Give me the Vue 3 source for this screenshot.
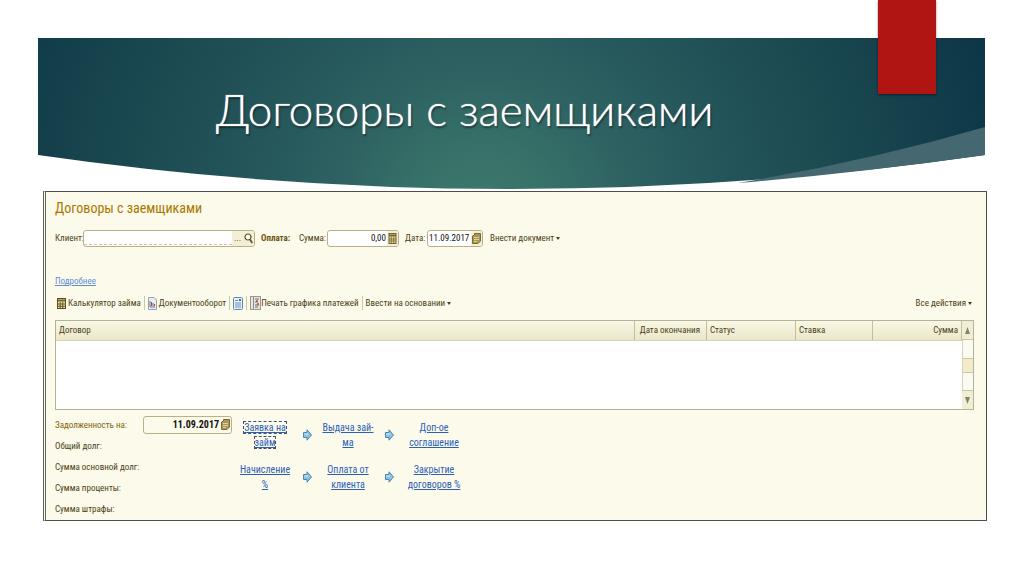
<script setup>
import { ref } from 'vue'

const client = ref('')
const amount = ref('0,00')
const payDate = ref('11.09.2017')
const debtDate = ref('11.09.2017')

const columns = [
  { title: 'Договор', cls: 'c-contract' },
  { title: 'Дата окончания', cls: 'c-end' },
  { title: 'Статус', cls: 'c-status' },
  { title: 'Ставка', cls: 'c-rate' },
  { title: 'Сумма', cls: 'c-sum' }
]

const totals = ['Общий долг:', 'Сумма основной долг:', 'Сумма проценты:', 'Сумма штрафы:']

const steps = [
  [['Заявка на', 'займ'], ['Выдача зай-', 'ма'], ['Доп-ое', 'соглашение']],
  [['Начисление', '%'], ['Оплата от', 'клиента'], ['Закрытие', 'договоров %']]
]
</script>

<template>
  <main class="slide">
    <div class="ribbon"></div>
    <header class="banner">
      <svg class="banner-bg" viewBox="0 0 947 151" preserveAspectRatio="none" aria-hidden="true">
        <defs>
          <radialGradient id="glow" gradientUnits="userSpaceOnUse" cx="445" cy="180" r="540">
            <stop offset="0" stop-color="#3f7b6c" />
            <stop offset="0.15" stop-color="#366f67" />
            <stop offset="0.25" stop-color="#2f6463" />
            <stop offset="0.42" stop-color="#25575b" />
            <stop offset="0.75" stop-color="#17444d" />
            <stop offset="1" stop-color="#0c3547" />
          </radialGradient>
        </defs>
        <path d="M0 0H947V117Q473 185 0 117Z" fill="url(#glow)" />
        <path d="M700 145Q830 123 947 89V117Q820 135 700 145Z" fill="#456770" />
      </svg>
      <h1>Договоры с заемщиками</h1>
    </header>

    <section class="panel">
      <h2>Договоры с заемщиками</h2>

      <form class="filters" @submit.prevent>
        <label for="client" class="l-client">Клиент:</label>
        <span class="field client">
          <input id="client" v-model="client" type="text" />
          <button type="button" class="pick" aria-label="Выбрать">...</button>
          <button type="button" class="pick" aria-label="Найти">
            <svg width="9" height="11" viewBox="0 0 9 11"><circle cx="4" cy="4" r="3" fill="#fffef4" stroke="#5d4f1c" stroke-width="1.2" /><path d="M6 6.5L8.3 10" stroke="#5d4f1c" stroke-width="1.6" /></svg>
          </button>
        </span>
        <strong>Оплата:</strong>
        <label for="amount" class="l-amount">Сумма:</label>
        <span class="field amount">
          <input id="amount" v-model="amount" type="text" />
          <button type="button" class="pick" aria-label="Калькулятор">
            <svg width="9" height="11" viewBox="0 0 9 11"><rect x="1" y="0.5" width="7" height="10" fill="#e9dfae" stroke="#75622a" /><path d="M1 2.5H8" stroke="#75622a" stroke-width="2" /><path d="M3.3 4V10M5.7 4V10M1 6H8M1 8H8" stroke="#75622a" stroke-width="0.8" /></svg>
          </button>
        </span>
        <label for="paydate" class="l-date">Дата:</label>
        <span class="field date">
          <input id="paydate" v-model="payDate" type="text" />
          <button type="button" class="pick" aria-label="Календарь">
            <svg width="9" height="11" viewBox="0 0 9 11"><path d="M2.5 0.5H8.5V8L6 10.5H0.5V3L2.5 2Z" fill="#a8965a" stroke="#7d6a30" /><path d="M2 4.5H7M2 6.5H7M2 8.5H5" stroke="#e5d9a0" stroke-width="0.9" /></svg>
          </button>
        </span>
        <button type="button" class="plain">Внести документ <i class="caret"></i></button>
      </form>

      <div class="more"><a href="#more">Подробнее</a></div>

      <nav class="toolbar">
        <button type="button" class="plain">
          <svg width="9" height="11" viewBox="0 0 9 11"><rect x="0.5" y="0.5" width="8" height="10" fill="#e9dfae" stroke="#5f4d18" /><path d="M1 2.5H8" stroke="#75622a" stroke-width="2" /><path d="M3.2 4V10M5.8 4V10M1 6H8M1 8.3H8" stroke="#5f4d18" stroke-width="0.9" /></svg>
          Калькулятор займа
        </button>
        <i class="sep"></i>
        <button type="button" class="plain">
          <svg width="9" height="13" viewBox="0 0 9 13"><path d="M0.5 0.5H6L8.5 3V12.5H0.5Z" fill="#e8eef3" stroke="#91a3b2" /><path d="M2 4V10H7" fill="none" stroke="#6d7885" /><path d="M3.5 9V5M5 9V6M6.5 9V7" stroke="#a5524d" /></svg>
          Документооборот
        </button>
        <i class="sep"></i>
        <button type="button" class="plain" aria-label="Список">
          <svg width="10" height="13" viewBox="0 0 10 13"><rect x="0.5" y="0.5" width="9" height="12" rx="1" fill="#e4f0fa" stroke="#5f86ab" /><path d="M2 3.5H5M2 6H8M2 8H8M2 10H8" stroke="#6287ad" stroke-width="0.9" /><rect x="6" y="2" width="2" height="2" fill="#386fa8" /></svg>
        </button>
        <i class="sep"></i>
        <button type="button" class="plain print">
          <svg width="11" height="14" viewBox="0 0 11 14"><rect x="0.5" y="0.5" width="10" height="13" fill="#e7e5df" stroke="#9a9691" /><path d="M3.5 1V13" stroke="#8b8b92" /><path d="M5 3H9M5 6H8M5 9H9M5 11H8" stroke="#7c6666" /><path d="M7 4V6M8 7V9" stroke="#a04a40" stroke-width="1.4" /></svg>
          Печать графика платежей
        </button>
        <i class="sep"></i>
        <button type="button" class="plain">Ввести на основании <i class="caret"></i></button>
        <button type="button" class="plain all">Все действия <i class="caret"></i></button>
      </nav>

      <div class="list">
        <table>
          <thead>
            <tr>
              <th v-for="c in columns" :key="c.title" :class="c.cls" scope="col">{{ c.title }}</th>
            </tr>
          </thead>
          <tbody></tbody>
        </table>
        <div class="scroll">
          <button type="button" class="top" aria-label="Вверх"><svg width="7" height="7" viewBox="0 0 7 7"><path d="M3.5 0L6 7H1Z" fill="#85836f" /></svg></button>
          <span class="track"><i class="thumb"></i></span>
          <button type="button" aria-label="Вниз"><svg width="7" height="7" viewBox="0 0 7 7"><path d="M3.5 7L1 0H6Z" fill="#85836f" /></svg></button>
        </div>
      </div>

      <div class="bottom">
        <div class="debts">
          <div class="debt">
            <label for="debtdate">Задолженность на:</label>
            <span class="field debt-date">
              <input id="debtdate" v-model="debtDate" type="text" />
              <button type="button" class="pick" aria-label="Календарь">
                <svg width="9" height="11" viewBox="0 0 9 11"><path d="M2.5 0.5H8.5V8L6 10.5H0.5V3L2.5 2Z" fill="#a8965a" stroke="#7d6a30" /><path d="M2 4.5H7M2 6.5H7M2 8.5H5" stroke="#e5d9a0" stroke-width="0.9" /></svg>
              </button>
            </span>
          </div>
          <div v-for="t in totals" :key="t" class="debt">{{ t }}</div>
        </div>

        <div class="flow">
          <template v-for="(row, r) in steps" :key="r">
            <template v-for="(s, i) in row" :key="s[0]">
              <svg v-if="i" class="arrow" width="9" height="12" viewBox="0 0 9 12"><path d="M0.5 3.5H4V0.8L8.5 6L4 11.2V8.5H0.5Z" fill="#8fc3e4" stroke="#4b87ae" /><path d="M1.5 5H5" stroke="#d5edfa" /></svg>
              <a href="#step" :class="{ focused: r === 0 && i === 0 }"><span>{{ s[0] }}</span><br /><span>{{ s[1] }}</span></a>
            </template>
          </template>
        </div>
      </div>
    </section>
  </main>
</template>

<style>
body {
  margin: 0;
  background: #fff;
}
</style>

<style scoped>
.slide {
  position: relative;
  box-sizing: border-box;
  min-height: 100vh;
  padding: 38px 37px 52px 38px;
  font: 9px/14px "Roboto Condensed", Roboto, "Liberation Sans", sans-serif;
  color: #4b3f16;
}
.ribbon {
  position: absolute;
  z-index: 2;
  top: 0;
  right: 88px;
  width: 58px;
  height: 94px;
  background: #b01513;
  box-shadow: 0 1px 2px rgba(0, 0, 0, 0.5);
}
.banner {
  position: relative;
  height: 151px;
  margin-right: 2px;
}
.banner-bg {
  position: absolute;
  inset: 0;
  width: 100%;
  height: 100%;
}
h1 {
  position: relative;
  margin: 0;
  padding: 46px 0 0 178px;
  font: 300 44px/50px Lato, "Open Sans", sans-serif;
  color: #fff;
  text-shadow: 0 0 1px #f4f8f7, 1px 2px 2px rgba(0, 0, 0, 0.5);
  white-space: nowrap;
}
.panel {
  margin: 2px 0 0 5px;
  padding: 0 12px 1px 9px;
  border: 1px solid #4d4d4a;
  border-left: 3px double #62625e;
  background: #fcfaea;
}
h2 {
  margin: 0;
  font: 14px/32px "Roboto Condensed", Roboto, "Liberation Sans", sans-serif;
  color: #a87800;
}
.filters,
.toolbar {
  display: flex;
  align-items: center;
  white-space: nowrap;
}
.filters {
  height: 28px;
}
.filters strong {
  width: 38px;
  margin-left: 6px;
  color: #6b5310;
}
.l-client,
.l-amount {
  width: 28px;
}
.l-date {
  width: 22px;
}
.field {
  display: flex;
  box-sizing: border-box;
  height: 17px;
  border: 1px solid #b9b08a;
  border-radius: 3px;
  background: #fff;
  overflow: hidden;
}
.field input {
  flex: 1;
  min-width: 0;
  width: 0;
  padding: 0 1px;
  border: 0;
  outline: 0;
  background: none;
  font: inherit;
  color: #111;
}
.client {
  width: 172px;
}
.client input {
  margin-bottom: 1px;
  border-bottom: 1px dashed #e3b5a8;
}
.amount {
  width: 72px;
  margin-right: 6px;
}
.amount input,
.debt-date input {
  text-align: right;
}
.date {
  width: 56px;
  margin-right: 7px;
}
button {
  margin: 0;
  padding: 0;
  border: 0;
  background: none;
  font: inherit;
  color: inherit;
}
.pick {
  display: flex;
  align-items: center;
  justify-content: center;
  width: 11px;
  background: #f3efd6;
}
.plain {
  display: flex;
  align-items: center;
  gap: 2px;
}
.caret {
  border: 2px solid transparent;
  border-top: 3px solid #4b3f16;
  border-bottom: 0;
}
.more {
  margin-top: 19px;
  line-height: 20px;
}
.more a {
  color: #5f8fd6;
}
.toolbar {
  height: 24px;
  padding: 0 2px;
}
.sep {
  width: 1px;
  height: 14px;
  margin: 0 3px;
  background: #cdc7a4;
}
.print {
  gap: 0;
}
.all {
  margin-left: auto;
}
.list {
  display: flex;
  box-sizing: border-box;
  height: 90px;
  margin-top: 5px;
  border: 1px solid #b5b394;
  background: #fff;
}
table {
  flex: 1;
  align-self: flex-start;
  table-layout: fixed;
  border-collapse: collapse;
}
th {
  box-sizing: border-box;
  height: 19px;
  padding: 0 3px;
  border-right: 1px solid #c3bf9c;
  border-bottom: 1px solid #d8d3b0;
  background: linear-gradient(#f9f7e6, #ebe7c8);
  font-weight: 400;
  text-align: left;
  white-space: nowrap;
}
.c-end {
  width: 72px;
  text-align: right;
  padding-right: 6px;
}
.c-status {
  width: 89px;
}
.c-rate {
  width: 77px;
}
.c-sum {
  width: 89px;
  text-align: right;
}
.scroll {
  display: flex;
  flex-direction: column;
  width: 11px;
  background: #fbfaf2;
}
.scroll button {
  display: flex;
  align-items: center;
  justify-content: center;
  height: 19px;
  background: #f1eed5;
  border-top: 1px solid #cbc6a2;
}
.scroll .top {
  border-top: 0;
  border-bottom: 1px solid #cbc6a2;
}
.track {
  display: flex;
  flex: 1;
  align-items: center;
  border-left: 1px solid #d8d4b8;
}
.thumb {
  flex: 1;
  height: 13px;
  border: solid #cbc6a2;
  border-width: 1px 0;
  background: #f1ebc9;
}
.bottom {
  display: flex;
  margin-top: 4px;
}
.debts {
  width: 177px;
}
.debt {
  display: flex;
  align-items: center;
  justify-content: space-between;
  height: 21px;
  white-space: nowrap;
}
.debt label {
  color: #80640f;
}
.debt-date {
  width: 89px;
  height: 18px;
  background: #fcfaea;
}
.debt-date input {
  font-size: 10px;
  font-weight: 700;
}
.debt-date .pick {
  background: none;
}
.flow {
  display: grid;
  grid-template-columns: 60px 24px 58px 24px 66px;
  grid-auto-rows: 42px;
  align-items: center;
  justify-items: center;
  margin: 0 0 0 3px;
  font-size: 10px;
  line-height: 15px;
  text-align: center;
  white-space: nowrap;
}
.flow a {
  color: #2c61b8;
}
.focused span {
  outline: 1px dashed #444f6c;
}
</style>
